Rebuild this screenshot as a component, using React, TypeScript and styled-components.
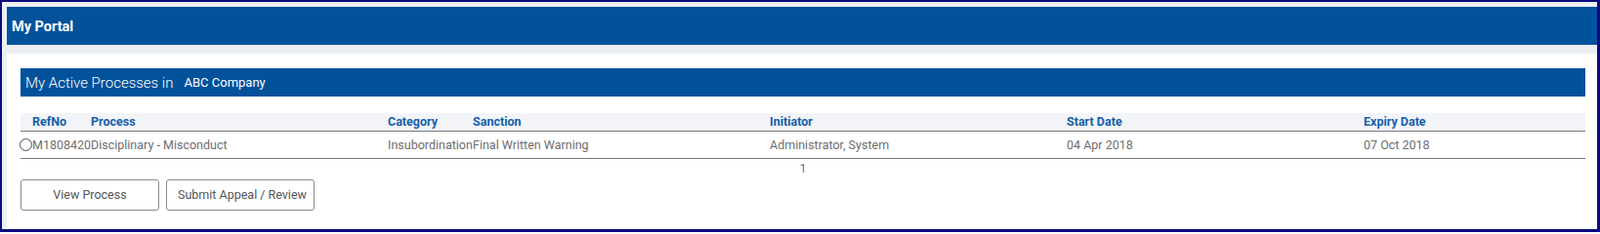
import React from "react";
import styled, {createGlobalStyle} from "styled-components";

const GlobalStyle = createGlobalStyle`
  html, body {
    margin: 0;
    padding: 0;
    background: #ffffff;
  }
  body {
    font-family: Roboto, "Liberation Sans", Arial, sans-serif;
  }
`

const Frame = styled.div`
  box-sizing: border-box;
  width: 1638px;
  height: 238px;
  border-style: solid;
  border-color: #0c0a80;
  border-width: 2px 3px 3px 2px;
  background: #eceff3;
  padding: 5px 0 0 5px;
  display: flex;
  flex-direction: column;
  gap: 9px;
`

const PortalHeader = styled.div`
  height: 39px;
  background: #01529b;
  color: #ffffff;
  font-size: 14.5px;
  font-weight: 700;
  display: flex;
  align-items: center;
  padding-left: 5px;
  padding-top: 2px;
  box-sizing: border-box;
`

const Panel = styled.div`
  flex: 1;
  background: #ffffff;
  padding: 15px 12px 0 14px;
`

const SectionBar = styled.div`
  height: 29px;
  background: #01529b;
  color: #ffffff;
  display: flex;
  align-items: center;
  padding-left: 5px;
`

const SectionTitle = styled.span`
  font-size: 15px;
  font-weight: 300;
`

const Company = styled.span`
  font-size: 13px;
  margin-left: 11px;
`

const Grid = styled.table`
  width: 100%;
  margin-top: 17px;
  border-collapse: collapse;
  table-layout: fixed;
  font-size: 12.5px;
`

const HeadRow = styled.tr`
  height: 18px;
  background: #f3f4f8;
  border-bottom: 1px solid #76787b;
`

const HeadCell = styled.th`
  padding: 0;
  text-align: left;
  color: #1560a8;
  font-weight: 700;
  white-space: nowrap;
`

const DataRow = styled.tr`
  height: 28px;
  border-bottom: 1px solid #76787b;
`

const Cell = styled.td`
  padding: 0;
  color: #6e6e72;
  white-space: nowrap;
`

const Radio = styled.span`
  display: block;
  box-sizing: border-box;
  width: 13px;
  height: 13px;
  border: 1px solid #4a4a4a;
  border-radius: 50%;
  margin-left: -1px;
`

const Pager = styled.div`
  box-sizing: border-box;
  height: 21px;
  padding-top: 3px;
  text-align: center;
  font-size: 12px;
  color: #6e6e72;
  line-height: 14px;
`

const Actions = styled.div`
  display: flex;
  gap: 7px;
`

const Button = styled.button<{ $width: number; $start?: boolean }>`
  box-sizing: border-box;
  width: ${p => p.$width}px;
  height: 32px;
  background: #ffffff;
  border: 1px solid #8a8a8a;
  border-radius: 3px;
  color: #555558;
  font-family: Roboto, "Liberation Sans", Arial, sans-serif;
  font-size: 12.5px;
  white-space: nowrap;
  overflow: hidden;
  padding: ${p => (p.$start ? "0 0 0 11px" : "0")};
  text-align: ${p => (p.$start ? "left" : "center")};
`

const columns = [
    {key: "radio", label: "", width: 12},
    {key: "ref", label: "RefNo", width: 60},
    {key: "process", label: "Process", width: 304},
    {key: "category", label: "Category", width: 87},
    {key: "sanction", label: "Sanction", width: 304},
    {key: "initiator", label: "Initiator", width: 304},
    {key: "start", label: "Start Date", width: 304},
    {key: "expiry", label: "Expiry Date", width: 227},
];

const rows = [
    {
        ref: "M1808420",
        process: "Disciplinary - Misconduct",
        category: "Insubordination",
        sanction: "Final Written Warning",
        initiator: "Administrator, System",
        start: "04 Apr 2018",
        expiry: "07 Oct 2018",
    },
];

const App = () => {
    return (
        <Frame>
            <GlobalStyle/>
            <PortalHeader>My Portal</PortalHeader>
            <Panel>
                <SectionBar>
                    <SectionTitle>My Active Processes in</SectionTitle>
                    <Company>ABC Company</Company>
                </SectionBar>
                <Grid>
                    <colgroup>
                        {columns.map(c => <col key={c.key} style={{width: c.width}}/>)}
                    </colgroup>
                    <thead>
                    <HeadRow>
                        {columns.map(c => <HeadCell key={c.key}>{c.label}</HeadCell>)}
                    </HeadRow>
                    </thead>
                    <tbody>
                    {rows.map(r => (
                        <DataRow key={r.ref}>
                            <Cell><Radio/></Cell>
                            <Cell>{r.ref}</Cell>
                            <Cell>{r.process}</Cell>
                            <Cell>{r.category}</Cell>
                            <Cell>{r.sanction}</Cell>
                            <Cell>{r.initiator}</Cell>
                            <Cell>{r.start}</Cell>
                            <Cell>{r.expiry}</Cell>
                        </DataRow>
                    ))}
                    </tbody>
                </Grid>
                <Pager>1</Pager>
                <Actions>
                    <Button $width={142}>View Process</Button>
                    <Button $width={152} $start>Submit Appeal / Review</Button>
                </Actions>
            </Panel>
        </Frame>
    )
}

export default App;
